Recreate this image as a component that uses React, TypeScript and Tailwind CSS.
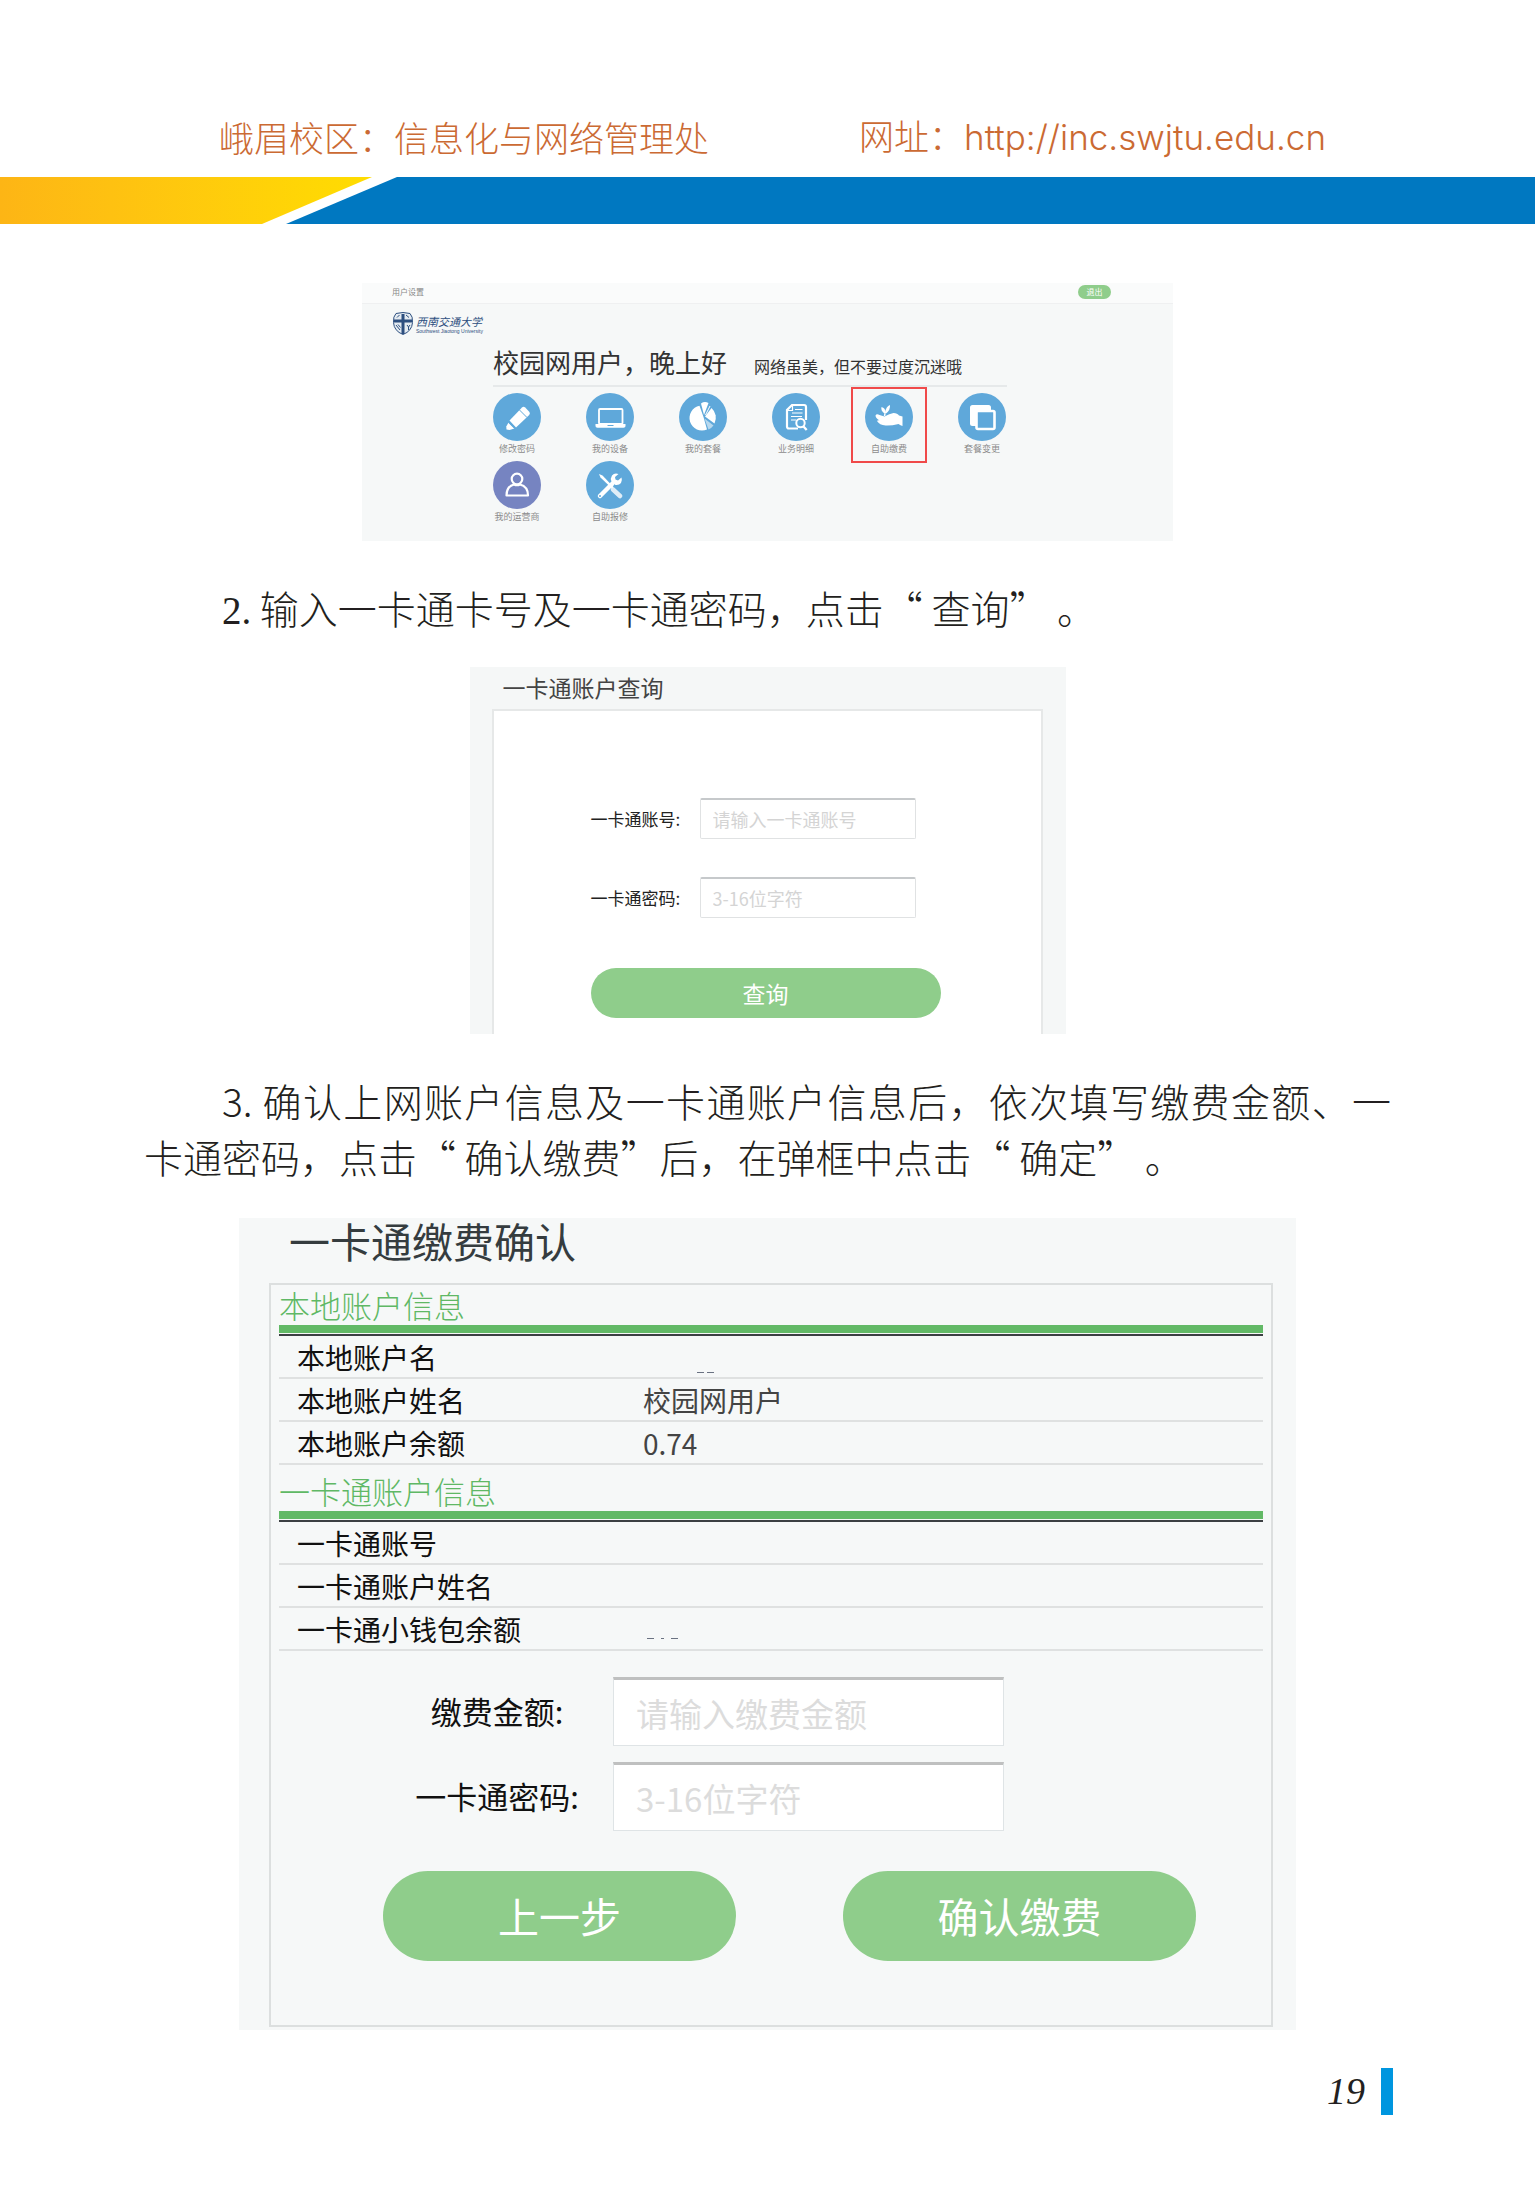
import type { ReactNode } from "react";

const icons: Record<string, ReactNode> = {
  pencil: (
    <>
      <path d="M16.5 27.5 29 14.5q1.5-1.5 3.2 0l4 4.2q1.5 1.6 0 3.2L23 34.5z" fill="#fff" />
      <path d="m26.5 17 7.5 7.5" stroke="#5fa8da" strokeWidth="1" />
      <path d="m15.5 29.5 6 6-5 1.5-3-.5-.2-3z" fill="#fff" />
      <path d="m15.5 29 6.5 6.5" stroke="#5fa8da" strokeWidth="1.2" />
    </>
  ),
  laptop: (
    <>
      <rect x="13" y="16" width="23.5" height="15" rx="1" fill="none" stroke="#fff" strokeWidth="1.8" />
      <path d="M9.5 31h30v2q0 1.8-2 1.8h-26q-2 0-2-1.8z" fill="#fff" />
      <path d="M21.5 32.5h6" stroke="#5fa8da" strokeWidth="1" />
    </>
  ),
  pie: (
    <>
      <path d="M24.5 24 20.5 12.8A12.5 12.5 0 1 0 28 36.5z" fill="#fff" />
      <path d="M25 22 22 10.5q3.5-2.5 7.5-.5z" fill="#fff" />
      <path d="m26 23.5 6.5-8.5a13 13 0 0 1 3 15.5z" fill="#fff" />
      <path d="m25.5 25.5 9 7a12 12 0 0 1-5 4z" fill="#fff" opacity=".55" />
      <path d="m26.5 22 4.5-9" stroke="#fff" strokeWidth="1" />
    </>
  ),
  report: (
    <>
      <path d="M26 35.5H17q-2 0-2-2V17l5-5h12q2 0 2 2v13" fill="none" stroke="#fff" strokeWidth="2.2" />
      <path
        d="M15 17.5h5.5V12M20 20h10.5M19 23.5h11M19 27h5M23 16.5h7.5"
        fill="none"
        stroke="#fff"
        strokeWidth="1.2"
      />
      <circle cx="28.5" cy="30" r="4.2" fill="#5fa8da" stroke="#fff" strokeWidth="2" />
      <path d="m31.5 33.5 3.2 3.5" stroke="#fff" strokeWidth="2.4" />
    </>
  ),
  hand: (
    <>
      <path
        d="M10.5 22.5q1-2 4-.5l5 1.5q5-3 9-3.5 4 0 5.5 2.5l3.5 1V33q-2-.5-4-2-7 1.8-13 1.5-6-.5-8.5-4.5.8-1 2.5-.5-4-2.5-4-5z"
        fill="#fff"
      />
      <path d="M19.5 20.5q-4-3-3-6.5 4 1 3.8 5Q21 13.5 25 12q.5 5-4 8.5z" fill="#fff" />
      <path d="m20 20.5-.5 2.5" stroke="#fff" strokeWidth="1.4" />
    </>
  ),
  copy: (
    <>
      <rect x="12" y="12" width="21" height="21" rx="2.5" fill="#fff" />
      <rect x="18.5" y="18" width="18" height="18" rx="1.5" fill="#5fa8da" stroke="#fff" strokeWidth="2.6" />
    </>
  ),
  user: (
    <>
      <circle cx="24" cy="18" r="5.3" fill="none" stroke="#fff" strokeWidth="2.2" />
      <path
        d="M13.5 34.5q0-9 7.5-11 3 1.5 6 0 8 2 8 11z"
        fill="none"
        stroke="#fff"
        strokeWidth="2.2"
        strokeLinejoin="round"
      />
    </>
  ),
  tools: (
    <>
      <path d="m13 13 3.5 1.5 11 11.5-1.5 1.5-11.5-11z" fill="#fff" />
      <path d="m27 28.5 7 6.5" stroke="#fff" strokeWidth="4.5" strokeLinecap="round" opacity=".8" />
      <path d="M14 35 26.5 22.5" stroke="#fff" strokeWidth="4.5" strokeLinecap="round" />
      <path
        d="M32.5 13q-4-1.5-6.5 1.5-2 3-.5 6l4 3.5q3.5.5 5.5-2 1.5-2.5.5-5.5L32 19.5l-2.5-1-.5-2.5z"
        fill="#fff"
      />
      <circle cx="14" cy="35" r="1" fill="#5fa8da" />
    </>
  ),
};

const services = [
  { icon: "pencil", label: "修改密码" },
  { icon: "laptop", label: "我的设备" },
  { icon: "pie", label: "我的套餐" },
  { icon: "report", label: "业务明细" },
  { icon: "hand", label: "自助缴费", marked: true },
  { icon: "copy", label: "套餐变更" },
  { icon: "user", label: "我的运营商", purple: true },
  { icon: "tools", label: "自助报修" },
];

const localAccount = [
  { label: "本地账户名", value: <Masked className="pt-8 pl-[54px]" /> },
  { label: "本地账户姓名", value: "校园网用户" },
  { label: "本地账户余额", value: "0.74" },
];

const cardAccount = [
  { label: "一卡通账号", value: "" },
  { label: "一卡通账户姓名", value: "" },
  { label: "一卡通小钱包余额", value: <Masked className="pt-5 pl-1" dotted /> },
];

// What is left of a value that has been wiped out
function Masked({ className, dotted }: { className: string; dotted?: boolean }) {
  return (
    <span className={`flex items-center gap-[3px] ${className}`}>
      <span className="h-px w-[7px] bg-gray-500" />
      {dotted && <span className="mx-1 h-px w-[3px] bg-gray-500" />}
      <span className="h-px w-[7px] bg-gray-500" />
    </span>
  );
}

function PageHeader() {
  return (
    <header>
      <div className="flex h-[177px] items-end gap-[150px] pb-[15px] pl-[219px] text-[35px] leading-[50px] font-light whitespace-nowrap text-[#cb6a33]">
        <p>峨眉校区：信息化与网络管理处</p>
        <p>
          网址：
          <a href="http://inc.swjtu.edu.cn" className="font-['Inter',sans-serif]">
            http://inc.swjtu.edu.cn
          </a>
        </p>
      </div>
      <div className="flex h-[47px]">
        <div className="w-[372px] bg-linear-to-r from-[#fdb515] to-[#ffdd00] [clip-path:polygon(0_0,100%_0,262px_100%,0_100%)]" />
        <div className="-ml-[86px] flex-1 bg-[#0078c1] [clip-path:polygon(111px_0,100%_0,100%_100%,0_100%)]" />
      </div>
    </header>
  );
}

function UniversityLogo() {
  return (
    <div className="flex items-center gap-[3px] text-[#2d4f7f]">
      <svg viewBox="0 0 20 23" className="h-[23px] w-5">
        <path
          d="M3 1.5Q10-.5 17 1.5q3 3 2.5 9Q19 19 10 22.5 1 19 .5 10.5 0 4.5 3 1.5z"
          fill="#e4ebf1"
          stroke="#2d4f7f"
        />
        <path d="M1 7.5h18v3H1zM8.5 2h3v20h-3z" fill="#2d4f7f" />
        <path
          d="M4 5.5 6.5 3M13 3l3 2.5M3 13l4 5M5 12.5l2.5 3M14 13l1.5 2 1.5-2m-1.5 2v3"
          stroke="#2d4f7f"
          fill="none"
        />
      </svg>
      <div>
        <p className="text-[11px] leading-[14px] italic">西南交通大学</p>
        <p className="font-['Liberation_Sans',sans-serif] text-[5px] leading-[6px]">Southwest Jiaotong University</p>
      </div>
    </div>
  );
}

function PortalHome() {
  return (
    <section className="mx-auto min-h-[258px] w-full max-w-[811px] bg-[#f6f8f8]">
      <div className="flex h-[21px] items-center justify-between border-b border-[#eff0f1] bg-[#fafbfb] pr-[62px] pb-0.5 pl-[30px]">
        <span className="text-[8px] leading-3 text-[#888]">用户设置</span>
        <button className="h-[14px] w-[33px] rounded-full bg-[#8fcd8b] text-[8px] leading-3 text-white">退出</button>
      </div>
      <div className="pt-2 pl-[31px]">
        <UniversityLogo />
      </div>
      <div className="mr-[166px] ml-[131px]">
        <div className="flex items-baseline gap-[27px] border-b-2 border-[#e6e9ea] pt-1 text-[#333]">
          <h2 className="text-[26px] leading-[46px]">校园网用户，晚上好</h2>
          <p className="text-[16px]">网络虽美，但不要过度沉迷哦</p>
        </div>
        <div className="flex flex-wrap gap-x-[45px] gap-y-1 pt-[6px]">
          {services.map((s) => (
            <a key={s.label} href="#" className="relative flex w-12 flex-col items-center">
              <svg viewBox="0 0 48 48" className="size-12">
                <circle cx="24" cy="24" r="24" fill={s.purple ? "#7684c1" : "#5fa8da"} />
                {icons[s.icon]}
              </svg>
              <span className="text-[9px] leading-4 whitespace-nowrap text-[#8c8c8c]">{s.label}</span>
              {s.marked && (
                <span className="absolute -inset-x-[14px] -inset-y-[6px] border-2 border-[#f04a4a]" />
              )}
            </a>
          ))}
        </div>
      </div>
    </section>
  );
}

function CardQuery() {
  const input =
    "h-[41px] w-[216px] rounded-xs border border-t-2 border-[#e0e2e3] border-t-[#c6c9cb] bg-white px-3 text-[18px] placeholder:text-[#d4d4d4]";

  return (
    <section className="mx-auto w-full max-w-[596px] bg-[#f5f7f7] pr-[23px] pl-[22px]">
      <h2 className="pb-0.5 pl-[11px] text-[23px] leading-[40px] text-[#444]">一卡通账户查询</h2>
      <form className="border-2 border-b-0 border-[#e6e8e8] bg-white pt-[87px] pr-[100px] pb-4 pl-[97px]">
        <div className="flex items-center justify-between pr-[25px]">
          <label htmlFor="query-account" className="text-[17px] text-[#222]">一卡通账号:</label>
          <input id="query-account" placeholder="请输入一卡通账号" className={input} />
        </div>
        <div className="mt-[38px] flex items-center justify-between pr-[25px]">
          <label htmlFor="query-password" className="text-[17px] text-[#222]">一卡通密码:</label>
          <input id="query-password" type="password" placeholder="3-16位字符" className={input} />
        </div>
        <button type="button" className="mt-[50px] h-[50px] w-full rounded-full bg-[#8fcd8b] text-[23px] text-white">
          查询
        </button>
      </form>
    </section>
  );
}

function AccountTable({ title, rows }: { title: string; rows: { label: string; value: ReactNode }[] }) {
  return (
    <div>
      <h3 className="text-[31px] leading-[40px] font-light text-[#5fb865]">{title}</h3>
      <div className="mb-px h-2 bg-[#62b966]" />
      <table className="w-full table-fixed border-t-2 border-[#3c4043] text-[28px] leading-[40px]">
        <tbody>
          {rows.map((row) => (
            <tr key={row.label} className="h-[43px] border-b-2 border-[#dfe1e1]">
              <th scope="row" className="w-[364px] pl-[18px] text-left font-normal text-[#111]">{row.label}</th>
              <td className="text-[#444]">{row.value}</td>
            </tr>
          ))}
        </tbody>
      </table>
    </div>
  );
}

function PaymentConfirm() {
  const input =
    "h-[69px] w-[391px] border border-t-3 border-[#dfe4e6] border-t-[#bfc0c0] bg-white px-[22px] text-[33px] placeholder:text-[#dcdcdc]";
  const button = "h-[90px] w-[353px] rounded-full bg-[#8fcd8b] text-[41px] text-white";

  return (
    <section className="mx-auto w-full max-w-[1057px] bg-[#f6f8f8] pr-[23px] pb-[3px] pl-[30px]">
      <h2 className="pl-[20px] text-[41px] leading-[44px] text-[#353c3f]">一卡通缴费确认</h2>
      <div className="mt-[21px] border-2 border-[#dcdfdf] px-2 pb-16">
        <div className="space-y-[6px]">
          <AccountTable title="本地账户信息" rows={localAccount} />
          <AccountTable title="一卡通账户信息" rows={cardAccount} />
        </div>
        <form className="pt-[26px]">
          <div className="grid grid-cols-[232px_auto] items-center justify-start gap-y-4 pl-[102px]">
            <label htmlFor="pay-amount" className="text-center text-[31px] text-[#111]">缴费金额:</label>
            <input id="pay-amount" placeholder="请输入缴费金额" className={input} />
            <label htmlFor="pay-password" className="text-center text-[31px] text-[#111]">一卡通密码:</label>
            <input id="pay-password" type="password" placeholder="3-16位字符" className={input} />
          </div>
          <div className="mt-10 flex gap-[107px] pl-[104px]">
            <button type="button" className={button}>上一步</button>
            <button type="button" className={button}>确认缴费</button>
          </div>
        </form>
      </div>
    </section>
  );
}

export default function App() {
  return (
    <div lang="zh-CN" className="min-h-screen bg-white font-['Noto_Sans_CJK_SC',sans-serif]">
      <PageHeader />
      <main className="px-36 pt-[59px] text-[#231f20]">
        <PortalHome />
        <p className="mt-[38px] mb-8 indent-[78px] text-[39px] leading-[56px] font-light">
          <span className="font-['Liberation_Serif',serif] leading-none font-normal">2.</span> 输入一卡通卡号及一卡通密码，点击“ 查询” 。
        </p>
        <CardQuery />
        <p className="mt-[38px] mb-[34px] text-justify indent-[78px] text-[39px] leading-[56px] font-light">
          3. 确认上网账户信息及一卡通账户信息后，依次填写缴费金额、一卡通密码，点击“ 确认缴费”后，在弹框中点击“ 确定” 。
        </p>
        <PaymentConfirm />
      </main>
      <footer className="flex items-center justify-end gap-4 pt-[38px] pr-[142px] pb-[69px] text-[#231f20]">
        <span className="font-['Liberation_Serif',serif] text-[38px] leading-[47px] italic">19</span>
        <span className="h-[47px] w-3 bg-[#0096df]" />
      </footer>
    </div>
  );
}
